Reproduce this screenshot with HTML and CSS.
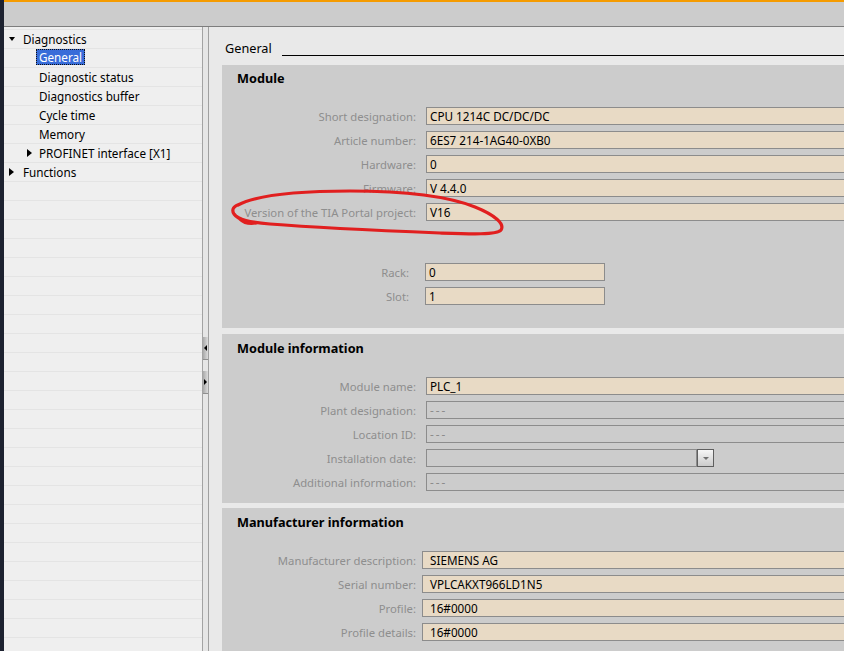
FILE: index.html
```html
<!doctype html>
<html>
<head>
	<title>Diagnostics - General</title>
	<meta charset="utf-8"/>
	<link rel="stylesheet" href="styles.css">
</head>
<body>
<div class="window">
	<div class="edge"></div>
	<div class="main">
		<div class="topbar"></div>
		<div class="workspace">

			<!-- navigation tree -->
			<div class="tree">
				<div class="tree-item">
					<span class="twisty"><span class="caret-down"></span></span>Diagnostics
				</div>
				<div class="tree-item sub"><span class="selected">General</span></div>
				<div class="tree-item sub">Diagnostic status</div>
				<div class="tree-item sub">Diagnostics buffer</div>
				<div class="tree-item sub">Cycle time</div>
				<div class="tree-item sub">Memory</div>
				<div class="tree-item sub-node">
					<span class="twisty small"><span class="caret-right"></span></span>PROFINET interface [X1]
				</div>
				<div class="tree-item">
					<span class="twisty"><span class="caret-right"></span></span>Functions
				</div>
			</div>

			<div class="splitter">
				<span class="split-btn"><span class="arrow-left"></span></span>
				<span class="split-btn"><span class="arrow-right"></span></span>
			</div>

			<!-- properties -->
			<div class="content">
				<div class="title">General<span class="title-rule"></span></div>

				<div class="section">
					<h2>Module</h2>
					<div class="row"><span class="label">Short designation:</span><span class="field">CPU 1214C DC/DC/DC</span></div>
					<div class="row"><span class="label">Article number:</span><span class="field">6ES7 214-1AG40-0XB0</span></div>
					<div class="row"><span class="label">Hardware:</span><span class="field">0</span></div>
					<div class="row"><span class="label">Firmware:</span><span class="field">V 4.4.0</span></div>
					<div class="row"><span class="label">Version of the TIA Portal project:</span><span class="field">V16</span></div>
					<div class="spacer"></div>
					<div class="row compact"><span class="label">Rack:</span><span class="field short">0</span></div>
					<div class="row compact"><span class="label">Slot:</span><span class="field short">1</span></div>
				</div>

				<div class="section info">
					<h2>Module information</h2>
					<div class="row"><span class="label">Module name:</span><span class="field">PLC_1</span></div>
					<div class="row"><span class="label">Plant designation:</span><span class="field empty">---</span></div>
					<div class="row"><span class="label">Location ID:</span><span class="field empty">---</span></div>
					<div class="row"><span class="label">Installation date:</span><span class="field empty date"></span><span class="drop-btn"><span class="drop-arrow"></span></span></div>
					<div class="row"><span class="label">Additional information:</span><span class="field empty">---</span></div>
				</div>

				<div class="section maker">
					<h2>Manufacturer information</h2>
					<div class="row"><span class="label">Manufacturer description:</span><span class="field">SIEMENS AG</span></div>
					<div class="row"><span class="label">Serial number:</span><span class="field">VPLCAKXT966LD1N5</span></div>
					<div class="row"><span class="label">Profile:</span><span class="field">16#0000</span></div>
					<div class="row"><span class="label">Profile details:</span><span class="field">16#0000</span></div>
				</div>
			</div>
		</div>
	</div>
</div>

<!-- red hand-drawn markup over the screenshot -->
<svg class="markup" width="844" height="651" viewBox="0 0 844 651">
	<path d="M238 205 C255 196 290 191 350 191 C410 191 450 197 475 207 C495 215 505 224 501 230 C497 235 470 234 440 233 C390 231 320 228 270 224 C250 222 238 220 234 214 C231 209 234 206 240 204"/>
	<path d="M240 219 C244 223 250 224 256 223"/>
</svg>
</body>
</html>
```

FILE: styles.css
```css
* {
    margin: 0;
    padding: 0;
    box-sizing: border-box;
}

body {
    width: 844px;
    height: 651px;
    overflow: hidden;
    font-family: "Noto Sans", "Open Sans", sans-serif;
    font-size: 11.7px;
    color: #000;
    background: #e9e9e9;
    position: relative;
}

.window {
    display: flex;
    height: 651px;
}

.edge {
    width: 4px;
    background: #1d2230;
}

.main {
    flex: 1;
    display: flex;
    flex-direction: column;
    min-width: 0;
}

.topbar {
    height: 27px;
    background: #cccccc;
    border-top: 2px solid #f59b00;
    border-bottom: 1px solid #7d7d7d;
}

.workspace {
    flex: 1;
    display: flex;
    min-height: 0;
}

/* tree */
.tree {
    width: 199px;
    flex-shrink: 0;
    padding-top: 3px;
    border-right: 1px solid #a3a3a3;
    background: repeating-linear-gradient(to bottom, #efefef 0 2px, #e4e4e4 2px 3px, #efefef 3px 19px);
}

.tree-item {
    height: 19px;
    line-height: 18px;
    display: flex;
    align-items: flex-start;
    padding-left: 5px;
    white-space: nowrap;
}

.tree-item.sub {
    padding-left: 35px;
}

.tree-item.sub-node {
    padding-left: 23px;
}

.twisty {
    width: 14px;
    height: 18px;
    display: flex;
    align-items: center;
}

.twisty.small {
    width: 12px;
}

.caret-down {
    border-left: 3.5px solid transparent;
    border-right: 3.5px solid transparent;
    border-top: 4px solid #000;
}

.caret-right {
    border-top: 4px solid transparent;
    border-bottom: 4px solid transparent;
    border-left: 5px solid #000;
}

.selected {
    margin-left: -3px;
    padding: 0 3px;
    line-height: 16px;
    height: 16px;
    background: #386cd9;
    color: #fff;
    outline: 1px dotted #101010;
    outline-offset: -1px;
}

/* splitter */
.splitter {
    width: 6px;
    flex-shrink: 0;
    padding-top: 310px;
    background: #e6e6e6;
    border-right: 1px solid #a0a0a0;
}

.split-btn {
    display: flex;
    align-items: center;
    height: 23px;
    margin-bottom: 11px;
    padding-left: 1px;
    background: linear-gradient(to right, #a9a9a9, #dcdcdc);
    border-bottom: 1px solid #8f8f8f;
}

.arrow-left {
    border-top: 3px solid transparent;
    border-bottom: 3px solid transparent;
    border-right: 3px solid #000;
}

.arrow-right {
    border-top: 3px solid transparent;
    border-bottom: 3px solid transparent;
    border-left: 3px solid #000;
}

/* properties */
.content {
    flex: 1;
    min-width: 0;
    padding-left: 13px;
    overflow: hidden;
    background: #e9e9e9;
}

.title {
    height: 38px;
    padding: 4px 0 0 3px;
    display: flex;
    align-items: center;
    font-size: 12.7px;
    white-space: nowrap;
}

.title-rule {
    flex: 1;
    height: 1px;
    margin: 14px 0 0 10px;
    background: #000;
}

.section {
    background: #cccccc;
    margin-bottom: 6px;
    padding-bottom: 17px;
}

.section.info {
    padding-top: 1px;
    padding-bottom: 6px;
    margin-bottom: 5px;
}

.section.maker {
    padding-top: 1px;
}

.section h2 {
    height: 26px;
    line-height: 26px;
    margin-bottom: 16px;
    padding-left: 15px;
    font-size: 12.7px;
    font-weight: 700;
}

.row {
    display: flex;
    align-items: center;
    height: 18px;
    margin-bottom: 6px;
    white-space: nowrap;
}

.label {
    flex-shrink: 0;
    width: 194px;
    margin-right: 10px;
    text-align: right;
    font-size: 11.3px;
    color: #8e8e8e;
}

.row.compact .label {
    width: 187px;
    margin-right: 16px;
}

.maker .label {
    margin-right: 6px;
}

.field {
    flex-shrink: 0;
    width: 640px;
    height: 18px;
    line-height: 16px;
    padding-left: 3px;
    border: 1px solid #8c8c8c;
    background: #e8dac5;
}

.maker .field {
    padding-left: 7px;
}

.field.short {
    width: 180px;
}

.field.empty {
    background: transparent;
    color: #8c8c8c;
    letter-spacing: 2px;
}

.field.date {
    width: 271px;
}

.drop-btn {
    flex-shrink: 0;
    width: 17px;
    height: 18px;
    display: flex;
    align-items: center;
    justify-content: center;
    border: 1px solid #5f5f5f;
    background: linear-gradient(to bottom, #f6f6f6, #cbcbcb);
}

.drop-arrow {
    border-left: 3px solid transparent;
    border-right: 3px solid transparent;
    border-top: 3px solid #707070;
}

.spacer {
    height: 36px;
}

.markup {
    position: absolute;
    left: 0;
    top: 0;
    pointer-events: none;
}

.markup path {
    fill: none;
    stroke: #e11f1f;
    stroke-width: 3.2;
    stroke-linecap: round;
    stroke-linejoin: round;
}
```
